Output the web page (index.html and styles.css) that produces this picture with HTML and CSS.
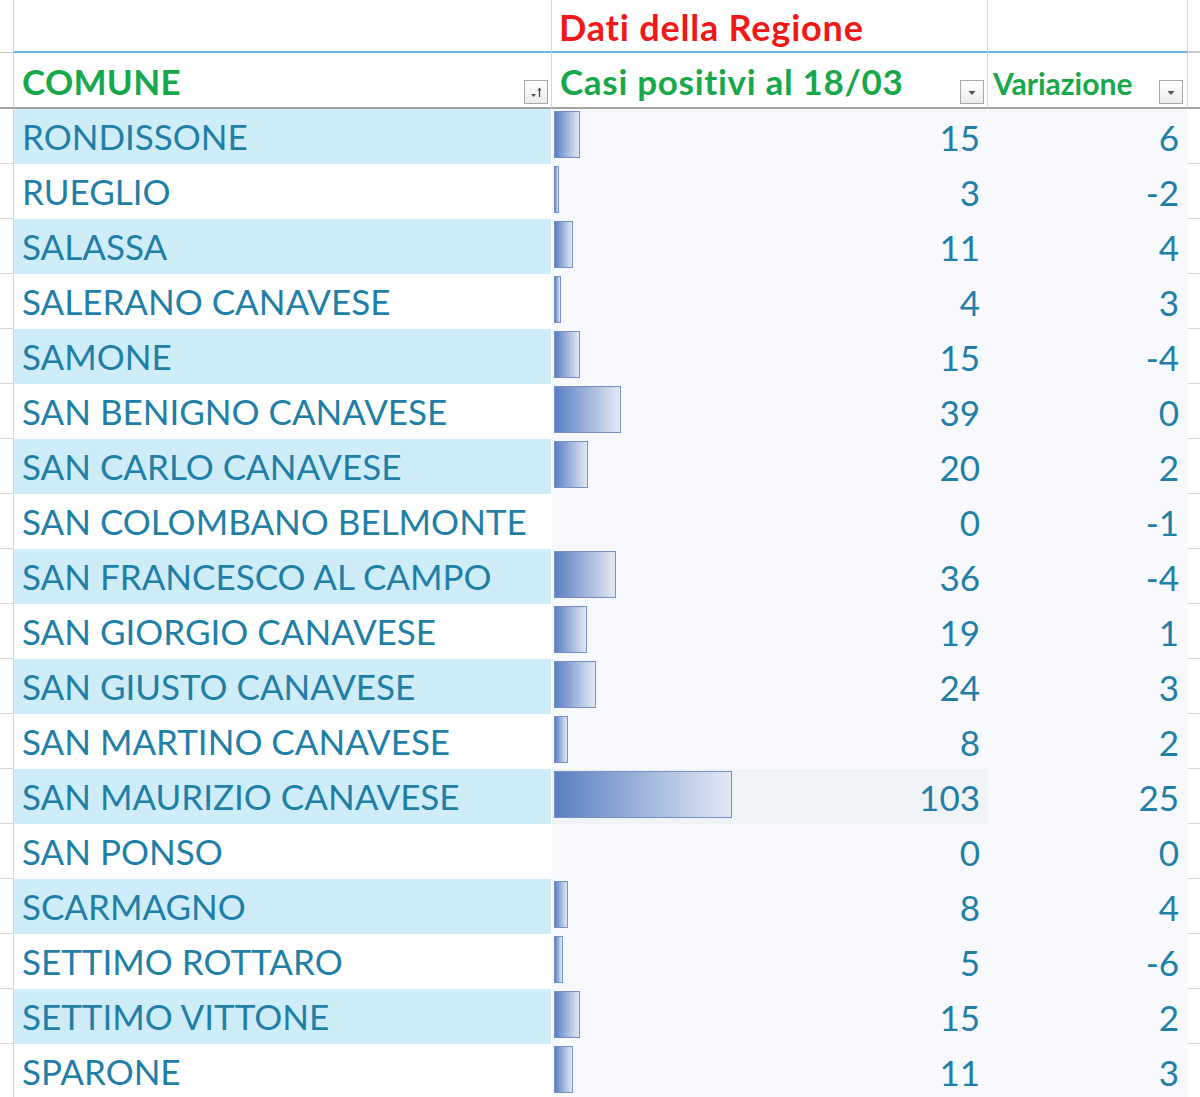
FILE: index.html
```html
<!DOCTYPE html>
<html lang="it">
<head>
<meta charset="utf-8">
<title>Dati della Regione</title>
<link rel="stylesheet" href="styles.css">
</head>
<body>
<div class="sheet">
  <div class="row head1">
    <div class="cell gut"></div>
    <div class="cell a"></div>
    <div class="cell b"><span class="region">Dati della Regione</span></div>
    <div class="cell c"></div>
    <div class="cell gut gut-r"></div>
  </div>
  <div class="row head2">
    <div class="cell gut"></div>
    <div class="cell a"><span class="hdr comune">COMUNE</span>
      <span class="filter"><svg width="20" height="20" viewBox="0 0 20 20"><path d="M5 12h5l-2.5 3z" fill="#555"/><path d="M13.5 15V6.5" stroke="#444" stroke-width="1.2"/><path d="M11.5 8.5l2-3 2 3z" fill="#444"/></svg></span></div>
    <div class="cell b"><span class="hdr casi">Casi positivi al 18/03</span>
      <span class="filter"><svg width="20" height="20" viewBox="0 0 20 20"><path d="M6.5 9h7l-3.5 4z" fill="#555"/></svg></span></div>
    <div class="cell c"><span class="hdr small">Variazione</span>
      <span class="filter"><svg width="20" height="20" viewBox="0 0 20 20"><path d="M6.5 9h7l-3.5 4z" fill="#555"/></svg></span></div>
    <div class="cell gut gut-r"></div>
  </div>

  <div class="row data odd"><div class="cell gut"></div><div class="cell a">RONDISSONE</div><div class="cell b"><span class="bar" style="width:26px"></span><span class="num">15</span></div><div class="cell c"><span class="num">6</span></div><div class="cell gut gut-r"></div></div>
  <div class="row data"><div class="cell gut"></div><div class="cell a">RUEGLIO</div><div class="cell b"><span class="bar" style="width:5px"></span><span class="num">3</span></div><div class="cell c"><span class="num">-2</span></div><div class="cell gut gut-r"></div></div>
  <div class="row data odd"><div class="cell gut"></div><div class="cell a">SALASSA</div><div class="cell b"><span class="bar" style="width:19px"></span><span class="num">11</span></div><div class="cell c"><span class="num">4</span></div><div class="cell gut gut-r"></div></div>
  <div class="row data"><div class="cell gut"></div><div class="cell a">SALERANO CANAVESE</div><div class="cell b"><span class="bar" style="width:7px"></span><span class="num">4</span></div><div class="cell c"><span class="num">3</span></div><div class="cell gut gut-r"></div></div>
  <div class="row data odd"><div class="cell gut"></div><div class="cell a">SAMONE</div><div class="cell b"><span class="bar" style="width:26px"></span><span class="num">15</span></div><div class="cell c"><span class="num">-4</span></div><div class="cell gut gut-r"></div></div>
  <div class="row data"><div class="cell gut"></div><div class="cell a">SAN BENIGNO CANAVESE</div><div class="cell b"><span class="bar" style="width:67px"></span><span class="num">39</span></div><div class="cell c"><span class="num">0</span></div><div class="cell gut gut-r"></div></div>
  <div class="row data odd"><div class="cell gut"></div><div class="cell a">SAN CARLO CANAVESE</div><div class="cell b"><span class="bar" style="width:34px"></span><span class="num">20</span></div><div class="cell c"><span class="num">2</span></div><div class="cell gut gut-r"></div></div>
  <div class="row data"><div class="cell gut"></div><div class="cell a">SAN COLOMBANO BELMONTE</div><div class="cell b"><span class="num">0</span></div><div class="cell c"><span class="num">-1</span></div><div class="cell gut gut-r"></div></div>
  <div class="row data odd"><div class="cell gut"></div><div class="cell a">SAN FRANCESCO AL CAMPO</div><div class="cell b"><span class="bar" style="width:62px"></span><span class="num">36</span></div><div class="cell c"><span class="num">-4</span></div><div class="cell gut gut-r"></div></div>
  <div class="row data"><div class="cell gut"></div><div class="cell a">SAN GIORGIO CANAVESE</div><div class="cell b"><span class="bar" style="width:33px"></span><span class="num">19</span></div><div class="cell c"><span class="num">1</span></div><div class="cell gut gut-r"></div></div>
  <div class="row data odd"><div class="cell gut"></div><div class="cell a">SAN GIUSTO CANAVESE</div><div class="cell b"><span class="bar" style="width:42px"></span><span class="num">24</span></div><div class="cell c"><span class="num">3</span></div><div class="cell gut gut-r"></div></div>
  <div class="row data"><div class="cell gut"></div><div class="cell a">SAN MARTINO CANAVESE</div><div class="cell b"><span class="bar" style="width:14px"></span><span class="num">8</span></div><div class="cell c"><span class="num">2</span></div><div class="cell gut gut-r"></div></div>
  <div class="row data odd"><div class="cell gut"></div><div class="cell a">SAN MAURIZIO CANAVESE</div><div class="cell b hl"><span class="bar" style="width:178px"></span><span class="num">103</span></div><div class="cell c"><span class="num">25</span></div><div class="cell gut gut-r"></div></div>
  <div class="row data"><div class="cell gut"></div><div class="cell a">SAN PONSO</div><div class="cell b"><span class="num">0</span></div><div class="cell c"><span class="num">0</span></div><div class="cell gut gut-r"></div></div>
  <div class="row data odd"><div class="cell gut"></div><div class="cell a">SCARMAGNO</div><div class="cell b"><span class="bar" style="width:14px"></span><span class="num">8</span></div><div class="cell c"><span class="num">4</span></div><div class="cell gut gut-r"></div></div>
  <div class="row data"><div class="cell gut"></div><div class="cell a">SETTIMO ROTTARO</div><div class="cell b"><span class="bar" style="width:9px"></span><span class="num">5</span></div><div class="cell c"><span class="num">-6</span></div><div class="cell gut gut-r"></div></div>
  <div class="row data odd"><div class="cell gut"></div><div class="cell a">SETTIMO VITTONE</div><div class="cell b"><span class="bar" style="width:26px"></span><span class="num">15</span></div><div class="cell c"><span class="num">2</span></div><div class="cell gut gut-r"></div></div>
  <div class="row data"><div class="cell gut"></div><div class="cell a">SPARONE</div><div class="cell b"><span class="bar" style="width:19px"></span><span class="num">11</span></div><div class="cell c"><span class="num">3</span></div><div class="cell gut gut-r"></div></div>
</div>
</body>
</html>
```

FILE: styles.css
```css
* { box-sizing: border-box; }
html, body { margin: 0; padding: 0; background: #fff; }
body {
  font-family: Lato, "Liberation Sans", sans-serif;
  font-variant-ligatures: none;
  width: 1200px;
  height: 1097px;
  overflow: hidden;
}
.sheet { width: 1200px; }
.row {
  display: grid;
  grid-template-columns: 14px 538px 436px 200px 12px;
}
.cell { display: flex; align-items: center; min-width: 0; }

.gut { border-right: 1px solid #d6d6d6; border-bottom: 1px solid #d6d6d6; }
.gut-r { border-right: none; }

/* header row 1 */
.head1 { height: 53px; }
.head1 .a, .head1 .b, .head1 .c { border-right: 1px solid #dadada; border-bottom: 2px solid #6ab8dc; }
.head1 .gut-r { border-bottom: 2px solid #6ab8dc; }
.head1 .gut { border-bottom-color: #c8c8c8; }
.region {
  color: #f01818;
  font-weight: 700;
  font-size: 36px;
  letter-spacing: 0.8px;
  padding-left: 7px;
  margin-top: 2px;
}

/* header row 2 */
.head2 { height: 56px; }
.head2 .cell { border-bottom: 2px solid #a4a4a4; }
.head2 .a, .head2 .b, .head2 .c { border-right: 1px solid #d6d6d6; justify-content: space-between; align-items: center; }
.head2 .a { padding-left: 8px; }
.head2 .b { padding-left: 8px; }
.head2 .c { padding-left: 5px; }
.hdr {
  color: #18a84c;
  font-weight: 700;
  font-size: 35px;
  margin-top: 2px;
}
.hdr.comune { letter-spacing: 0.3px; }
.hdr.casi { letter-spacing: 0.7px; }
.hdr.small { font-size: 30px; margin-top: 6px; }
.filter {
  align-self: flex-end;
  margin: 0 3px 3px 0;
  width: 24px;
  height: 24px;
  border: 1px solid #a8a8a8;
  background: linear-gradient(#ffffff, #ececec);
  display: flex;
  align-items: center;
  justify-content: center;
}
.head2 .c .filter { margin-right: 4px; }

/* data rows */
.data { height: 55px; }
.data .a {
  padding-left: 8px;
  color: #1f7fa7;
  font-size: 35px;
  background: #fff;
  margin-right: 1px;
  line-height: 1;
}
.data.odd .a { background: #cfedf9; }
.data .b, .data .c { background: #f8f9fd; color: #1f7fa7; font-size: 35px; }
.data .b { align-items: flex-start; padding: 2px 8px 0 2px; }
.data .b.hl { background: #f1f4f7; }
.data .c { padding: 2px 9px 0 0; justify-content: flex-end; }
.data .b .num { margin-left: auto; align-self: center; }
.num { line-height: 1; }
.bar {
  display: block;
  height: 47px;
  border: 1px solid #7590c6;
  background: linear-gradient(to right, #5a80c2, #e3e9f4);
  flex: none;
}
```
